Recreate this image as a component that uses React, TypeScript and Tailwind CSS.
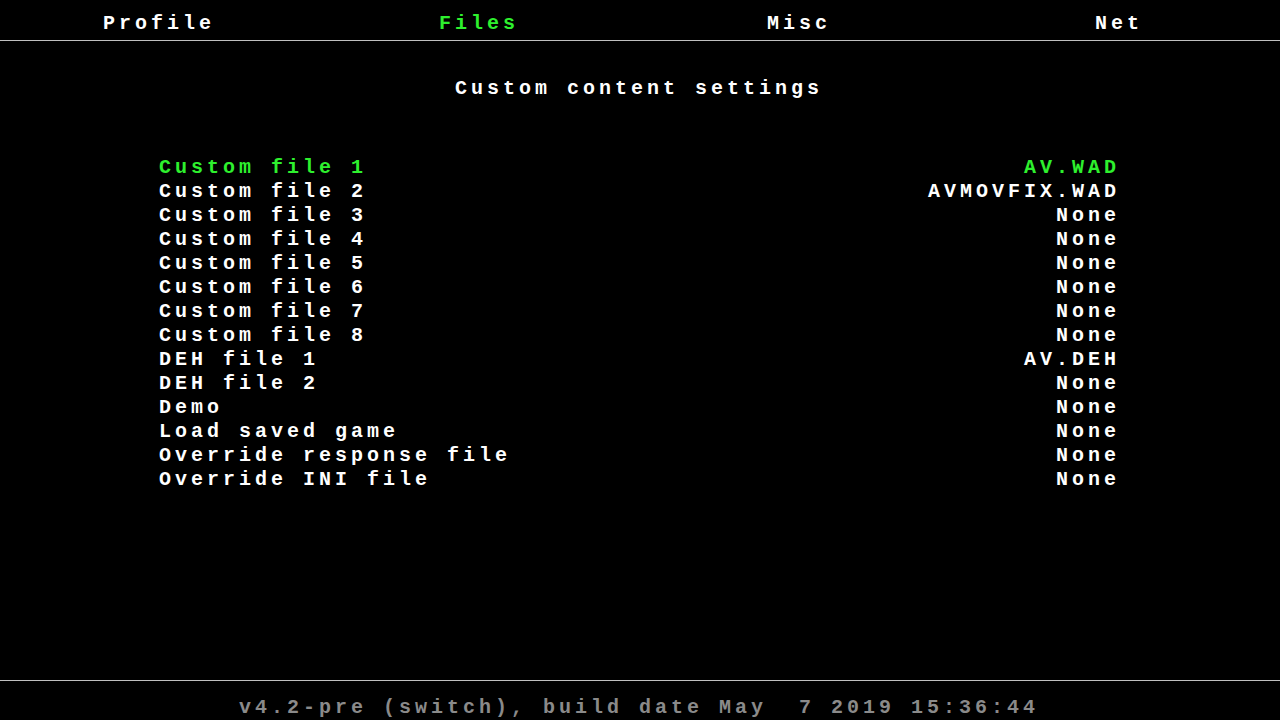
import React from "react";

const tabs = ["Profile", "Files", "Misc", "Net"];
const activeTab = 1;

const rows: [string, string][] = [
  ["Custom file 1", "AV.WAD"],
  ["Custom file 2", "AVMOVFIX.WAD"],
  ["Custom file 3", "None"],
  ["Custom file 4", "None"],
  ["Custom file 5", "None"],
  ["Custom file 6", "None"],
  ["Custom file 7", "None"],
  ["Custom file 8", "None"],
  ["DEH file 1", "AV.DEH"],
  ["DEH file 2", "None"],
  ["Demo", "None"],
  ["Load saved game", "None"],
  ["Override response file", "None"],
  ["Override INI file", "None"],
];
const selected = 0;

const font = "font-['Liberation_Mono','DejaVu_Sans_Mono',monospace] font-bold text-[20px] tracking-[4px] leading-[24px]";

export default function App() {
  return (
    <div className={`w-[1280px] h-[720px] bg-black text-white flex flex-col overflow-hidden ${font}`}>
      <header className="h-[41px] border-b border-[#c0c0c0] grid grid-cols-4 items-center">
        {tabs.map((t, i) => (
          <div
            key={t}
            className={`text-center pr-[2px] pt-[7px] ${i === activeTab ? "text-[#2ef02e]" : "text-white"}`}
          >
            {t}
          </div>
        ))}
      </header>

      <h1 className="mt-[36px] text-center pr-[2px]">Custom content settings</h1>

      <ul className="mt-[55px] pl-[159px] pr-[160px] flex flex-col">
        {rows.map(([label, value], i) => (
          <li
            key={label}
            className={`flex justify-between ${i === selected ? "text-[#2ef02e]" : "text-white"}`}
          >
            <span>{label}</span>
            <span>{value}</span>
          </li>
        ))}
      </ul>

      <footer className="mt-auto h-[40px] border-t border-[#c0c0c0] text-[#8a8a8a] text-center whitespace-pre pt-[15px] pr-[2px]">
        {"v4.2-pre (switch), build date May  7 2019 15:36:44"}
      </footer>
    </div>
  );
}
